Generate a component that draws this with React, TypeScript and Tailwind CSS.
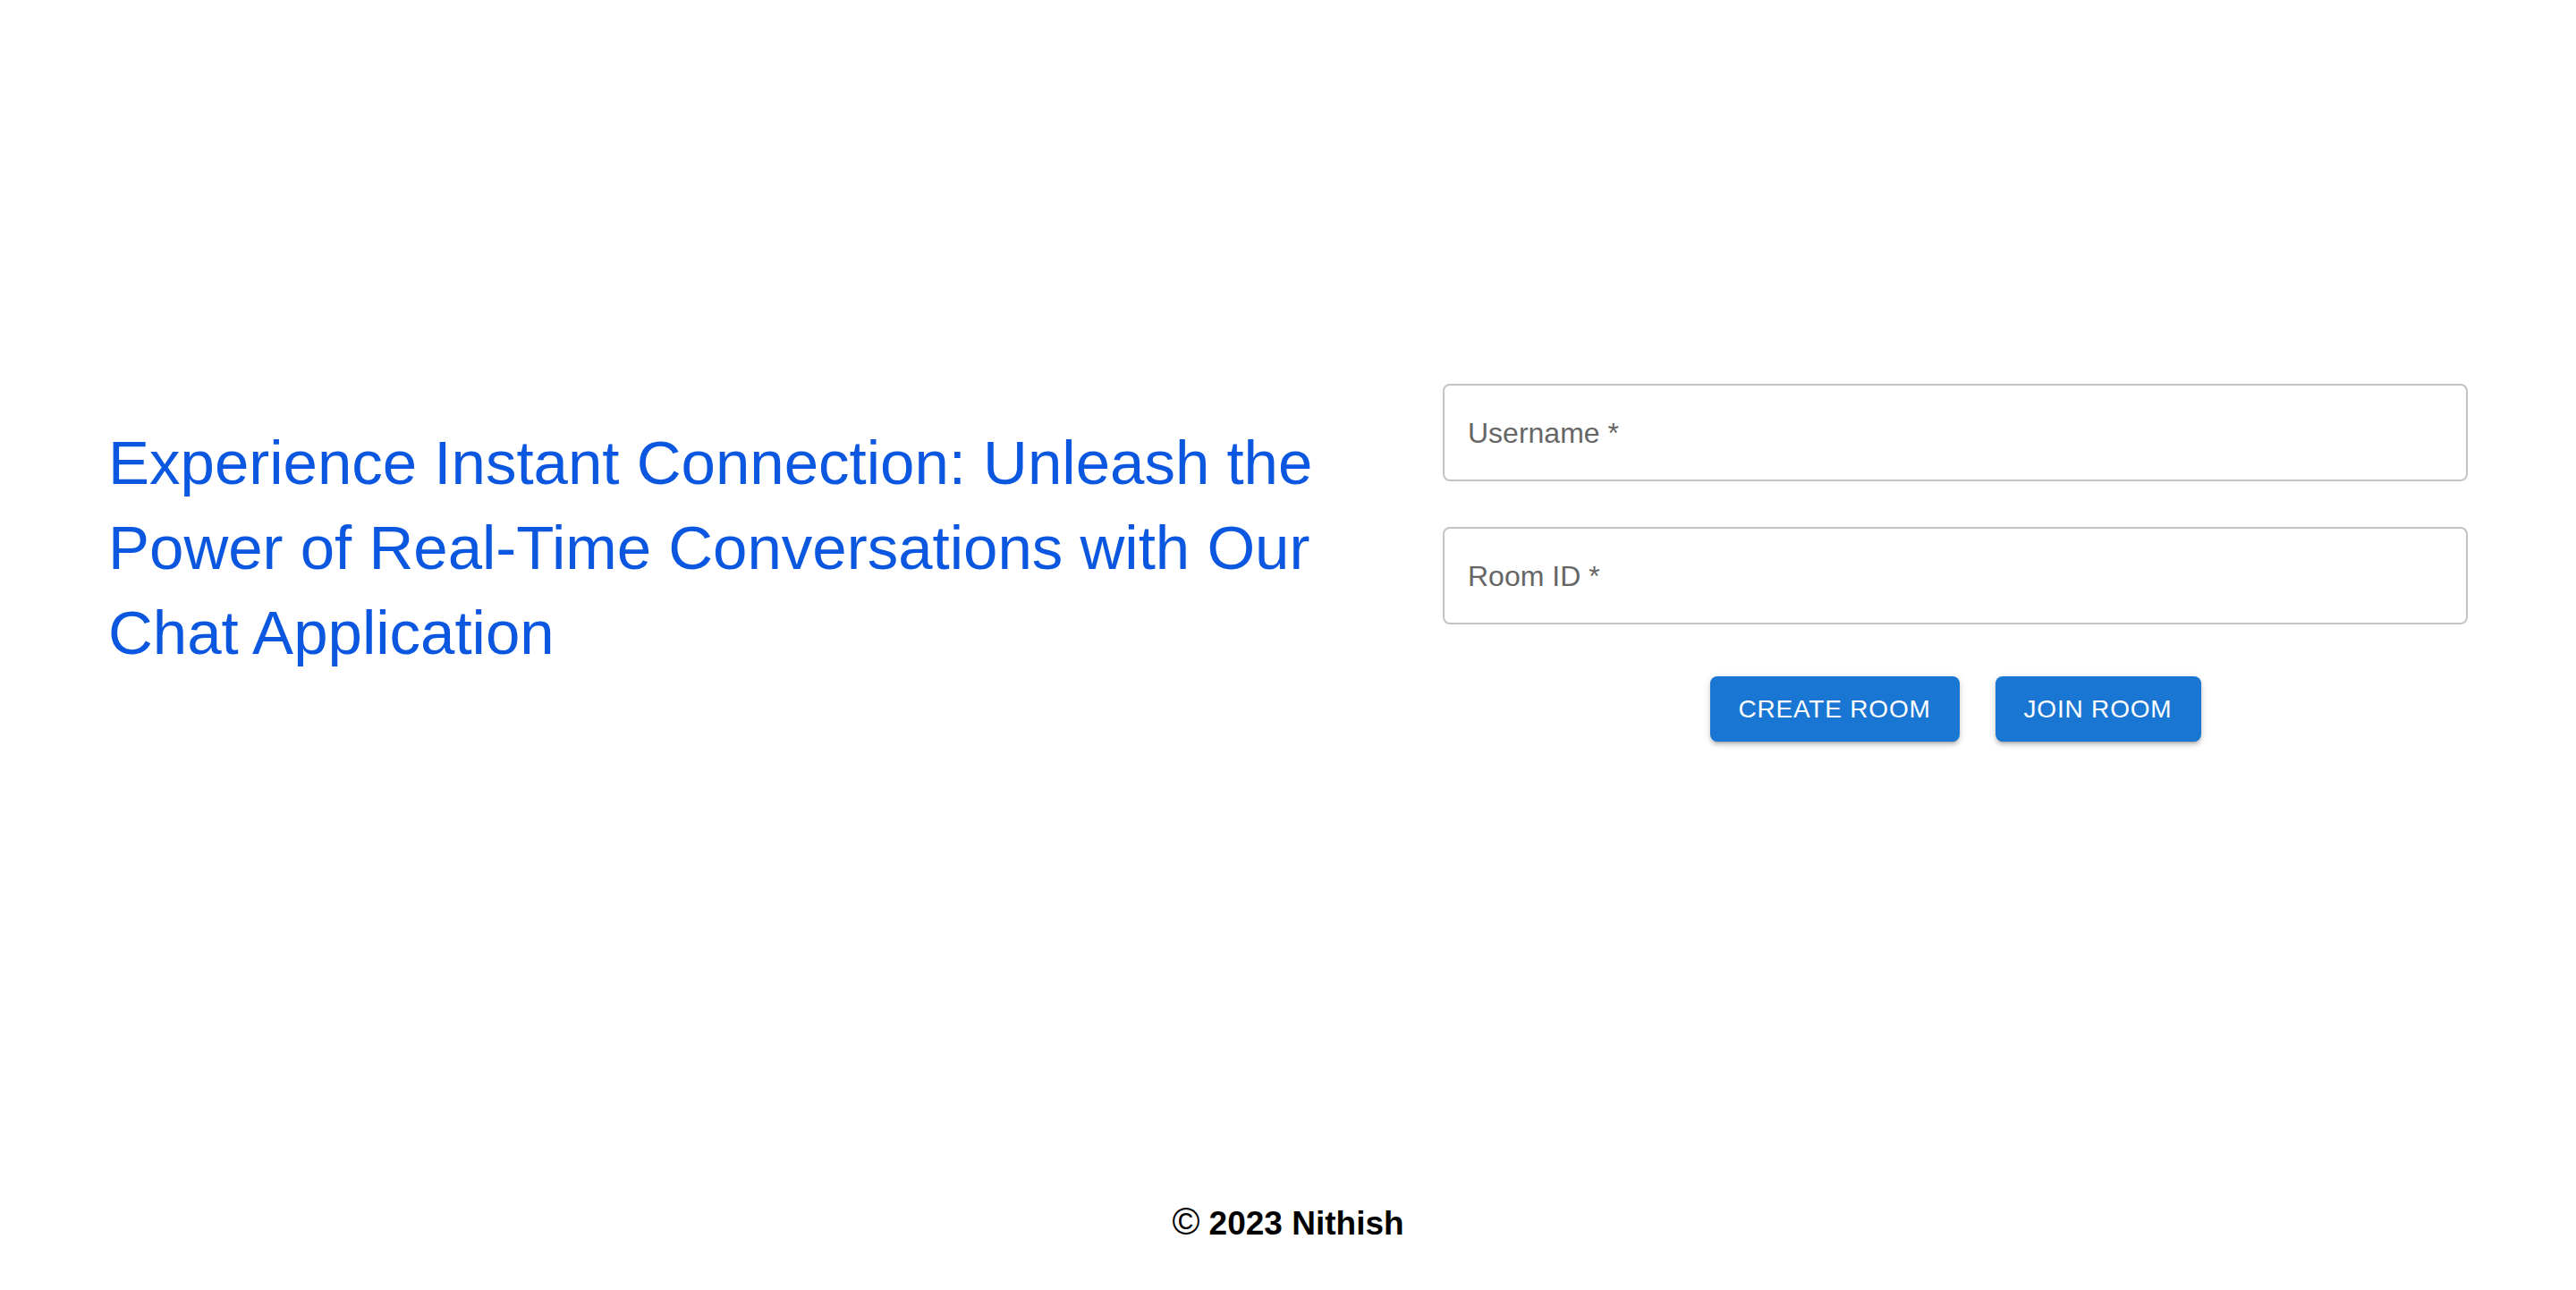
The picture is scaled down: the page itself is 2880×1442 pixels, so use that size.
import { useState } from 'react'

const font = { fontFamily: '"Liberation Sans", Arial, sans-serif' }

function Field({ label, value, onChange }: { label: string; value: string; onChange: (v: string) => void }) {
  return (
    <div className="relative h-[109px] w-full rounded-[8px] border-2 border-[#c4c4c4] bg-white">
      <input
        value={value}
        onChange={(e) => onChange(e.target.value)}
        className="absolute inset-0 h-full w-full rounded-[8px] bg-transparent pl-[26px] text-[32px] text-[#222] outline-none"
        style={font}
      />
      {!value && (
        <div className="pointer-events-none flex h-full items-center pl-[26px] text-[32px] leading-none text-[#666]">
          {label} *
        </div>
      )}
    </div>
  )
}

export default function App() {
  const [username, setUsername] = useState('')
  const [roomId, setRoomId] = useState('')

  return (
    <div className="flex min-h-[1442px] flex-col bg-white" style={font}>
      <main className="flex-1 px-[121px] pt-[429px]">
        <div className="flex items-start justify-between">
          {/* Heading */}
          <div className="mt-[41px] w-[1400px]">
            <h1 className="text-[69px] font-normal leading-[95px] text-[#0b57e0]">
              Experience Instant Connection: Unleash the Power of Real-Time Conversations with Our Chat
              Application
            </h1>
          </div>

          {/* Form */}
          <div className="flex w-[1146px] flex-col">
            <Field label="Username" value={username} onChange={setUsername} />
            <div className="mt-[51px]">
              <Field label="Room ID" value={roomId} onChange={setRoomId} />
            </div>
            <div className="mt-[58px] flex justify-center gap-[40px]">
              <button className="flex h-[73px] w-[279px] items-center justify-center rounded-[8px] bg-[#1976d2] text-[28px] uppercase tracking-[0.02857em] text-white shadow-[0_5px_2px_-4px_rgba(0,0,0,0.2),0_4px_4px_0_rgba(0,0,0,0.14),0_2px_10px_0_rgba(0,0,0,0.12)]">
                Create Room
              </button>
              <button className="flex h-[73px] w-[230px] items-center justify-center rounded-[8px] bg-[#1976d2] text-[28px] uppercase tracking-[0.02857em] text-white shadow-[0_5px_2px_-4px_rgba(0,0,0,0.2),0_4px_4px_0_rgba(0,0,0,0.14),0_2px_10px_0_rgba(0,0,0,0.12)]">
                Join Room
              </button>
            </div>
          </div>
        </div>
      </main>

      <footer className="pb-[52px] text-center text-[37px] font-bold leading-[44px] text-black">
        <span className="text-[42px] font-normal">©</span> 2023 Nithish
      </footer>
    </div>
  )
}
